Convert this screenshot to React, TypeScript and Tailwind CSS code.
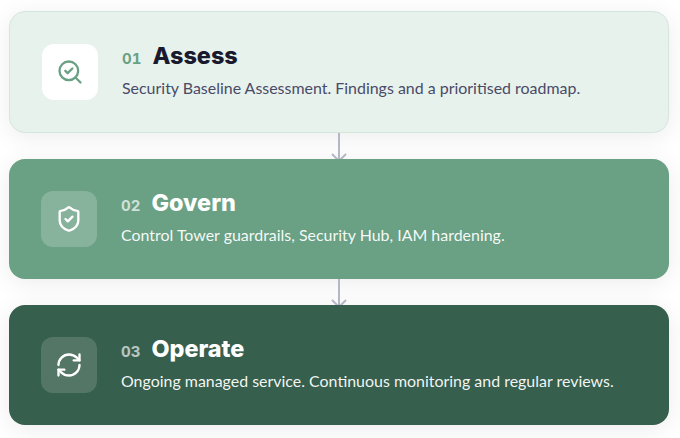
import { SearchCheck, ShieldCheck, RefreshCw } from 'lucide-react';
import type { ReactNode } from 'react';

const Connector = () => (
  <div className="flex h-[26px] justify-center">
    <svg width="18" height="26" viewBox="0 0 18 26" fill="none" stroke="#b4b7c6" strokeWidth="2">
      <path d="M9 0V26" />
      <path d="M2 21L9 28L16 21" />
    </svg>
  </div>
);

type StepProps = {
  num: string;
  title: string;
  text: string;
  icon: ReactNode;
  card: string;
  box: string;
  numColor: string;
  titleColor: string;
  textColor: string;
};

const Step = ({ num, title, text, icon, card, box, numColor, titleColor, textColor }: StepProps) => (
  <div className={`flex items-center gap-6 rounded-2xl px-8 shadow-[0_4px_24px_rgba(0,0,0,0.08)] ${card}`}>
    <div className={`flex h-14 w-14 shrink-0 items-center justify-center rounded-xl ${box}`}>{icon}</div>
    <div className="min-w-0 pb-[3px]">
      <div className="flex items-baseline gap-[11px]">
        <span className={`font-['Inter',sans-serif] text-[15px] leading-6 font-bold tabular-nums ${numColor}`}>{num}</span>
        <span className={`font-['Inter',sans-serif] text-[23.4px] leading-[30px] font-extrabold ${titleColor}`}>{title}</span>
      </div>
      <p className={`mt-[5px] font-['Lato',sans-serif] text-[15.95px] leading-6 ${textColor}`}>{text}</p>
    </div>
  </div>
);

export default function App() {
  return (
    <div className="h-[438px] w-[680px] overflow-hidden bg-white pt-[11px] pr-[11px] pl-[9px]">
      <Step
        num="01"
        title="Assess"
        text="Security Baseline Assessment. Findings and a prioritised roadmap."
        icon={<SearchCheck className="h-7 w-7 text-[#6aa184]" strokeWidth={2} />}
        card="h-[122px] border border-[#d5e6dd] bg-[#e8f2ec]"
        box="bg-white"
        numColor="text-[#6aa184]"
        titleColor="text-[#1a1a2e]"
        textColor="text-[#4a4a68]"
      />
      <Connector />
      <Step
        num="02"
        title="Govern"
        text="Control Tower guardrails, Security Hub, IAM hardening."
        icon={<ShieldCheck className="h-7 w-7 text-white" strokeWidth={2} />}
        card="h-[120px] bg-[#6aa184]"
        box="bg-white/20"
        numColor="text-white/70"
        titleColor="text-white"
        textColor="text-white/95"
      />
      <Connector />
      <Step
        num="03"
        title="Operate"
        text="Ongoing managed service. Continuous monitoring and regular reviews."
        icon={<RefreshCw className="h-7 w-7 text-white" strokeWidth={2} />}
        card="h-[120px] bg-[#365f4d]"
        box="bg-white/15"
        numColor="text-white/65"
        titleColor="text-white"
        textColor="text-white/95"
      />
    </div>
  );
}
